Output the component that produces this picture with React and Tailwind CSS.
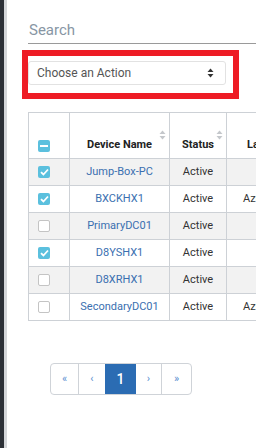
import React from "react";

const rows = [
  { name: "Jump-Box-PC", checked: true, last: "" },
  { name: "BXCKHX1", checked: true, last: "Azure AD" },
  { name: "PrimaryDC01", checked: false, last: "" },
  { name: "D8YSHX1", checked: true, last: "" },
  { name: "D8XRHX1", checked: false, last: "" },
  { name: "SecondaryDC01", checked: false, last: "Azure AD" },
];

function SortIcon({ color = "#c4c7cb" }) {
  return (
    <svg width="7" height="10" viewBox="0 0 7 10" className="block">
      <path d="M3.5 0.5 L6.5 4 L0.5 4 Z" fill={color} />
      <path d="M3.5 9.5 L6.5 6 L0.5 6 Z" fill={color} />
    </svg>
  );
}

function Check({ checked }) {
  if (checked) {
    return (
      <div className="w-[12px] h-[12px] rounded-[2px] bg-[#5bc0de] flex items-center justify-center">
        <svg width="9" height="8" viewBox="0 0 9 8">
          <path d="M1 4.2 L3.4 6.5 L8 1.5" stroke="#fff" strokeWidth="1.8" fill="none" />
        </svg>
      </div>
    );
  }
  return <div className="w-[12px] h-[12px] rounded-[2px] border border-[#c4c4c4] bg-white" />;
}

export default function App() {
  return (
    <div className="w-[256px] h-[448px] overflow-hidden flex bg-white" style={{ fontFamily: "Roboto, 'Liberation Sans', sans-serif" }}>
      <div className="w-[4px] shrink-0 bg-[#2c3036]" />
      <div className="w-[3px] shrink-0 bg-[#d4d6d9]" />
      <div className="flex-1 min-w-0 pl-[21px] pt-[20px]">
        <div className="border-b border-[#9a9a9a] pb-[3px] text-[15px] leading-[20px] text-[#8796a4] pl-[1px]">Search</div>
        <div className="mt-[6px] -ml-[6px] w-[217px] border-[6px] border-[#ee1c25] pt-[5px] pb-[8px] pr-[7px]">
          <div className="h-[24px] border border-[#e2e2e2] rounded-[3px] flex items-center justify-between pl-[8px] pr-[11px] text-[12px] text-[#555]">
            <span>Choose an Action</span>
            <svg width="7" height="10" viewBox="0 0 7 10" className="block">
              <path d="M3.5 0.5 L6.5 4 L0.5 4 Z" fill="#333" />
              <path d="M3.5 9.5 L6.5 6 L0.5 6 Z" fill="#333" />
            </svg>
          </div>
        </div>
        <table className="mt-[13px] border-collapse text-[11px] table-fixed w-[300px]">
          <colgroup>
            <col className="w-[41px]" />
            <col className="w-[100px]" />
            <col className="w-[57px]" />
            <col className="w-[102px]" />
          </colgroup>
          <thead>
            <tr className="h-[46px]">
              <th className="border border-[#cdd1d6] align-bottom pl-[9px] pb-[6px] text-left">
                <div className="w-[12px] h-[12px] rounded-[2px] bg-[#5bc0de] flex items-center justify-center">
                  <div className="w-[8px] h-[2px] bg-white" />
                </div>
              </th>
              <th className="border border-[#cdd1d6] align-bottom pb-[5px] font-bold text-[#222] relative">
                <span className="absolute right-[3px] top-[17px]"><SortIcon /></span>
                Device Name
              </th>
              <th className="border border-[#cdd1d6] align-bottom pb-[5px] font-bold text-[#222] relative">
                <span className="absolute right-[3px] top-[17px]"><SortIcon /></span>
                Status
              </th>
              <th className="border border-[#cdd1d6] align-bottom pb-[5px] font-bold text-[#222] text-left pl-[20px]">
                Last Login
              </th>
            </tr>
          </thead>
          <tbody>
            {rows.map((r, i) => (
              <tr key={r.name} className={i % 2 === 0 ? "h-[27px] bg-[#f2f2f2]" : "h-[27px] bg-white"}>
                <td className="border border-[#cdd1d6] pl-[9px]">
                  <Check checked={r.checked} />
                </td>
                <td className="border border-[#cdd1d6] text-center text-[#3a6fb0]">{r.name}</td>
                <td className="border border-[#cdd1d6] text-center text-[#333]">Active</td>
                <td className="border border-[#cdd1d6] text-left pl-[16px] text-[#333] whitespace-nowrap">{r.last}</td>
              </tr>
            ))}
          </tbody>
        </table>
        <div className="mt-[42px] ml-[22px] flex w-fit h-[32px] border border-[#cfd3d8] rounded-[4px] overflow-hidden text-[11px] text-[#5a8fd0]">
          <div className="w-[28px] flex items-center justify-center border-r border-[#cfd3d8]">«</div>
          <div className="w-[26px] flex items-center justify-center">‹</div>
          <div className="w-[31px] flex items-center justify-center bg-[#2b6cb3] text-white text-[14px] font-medium">1</div>
          <div className="w-[26px] flex items-center justify-center border-r border-[#cfd3d8]">›</div>
          <div className="w-[29px] flex items-center justify-center">»</div>
        </div>
      </div>
    </div>
  );
}
